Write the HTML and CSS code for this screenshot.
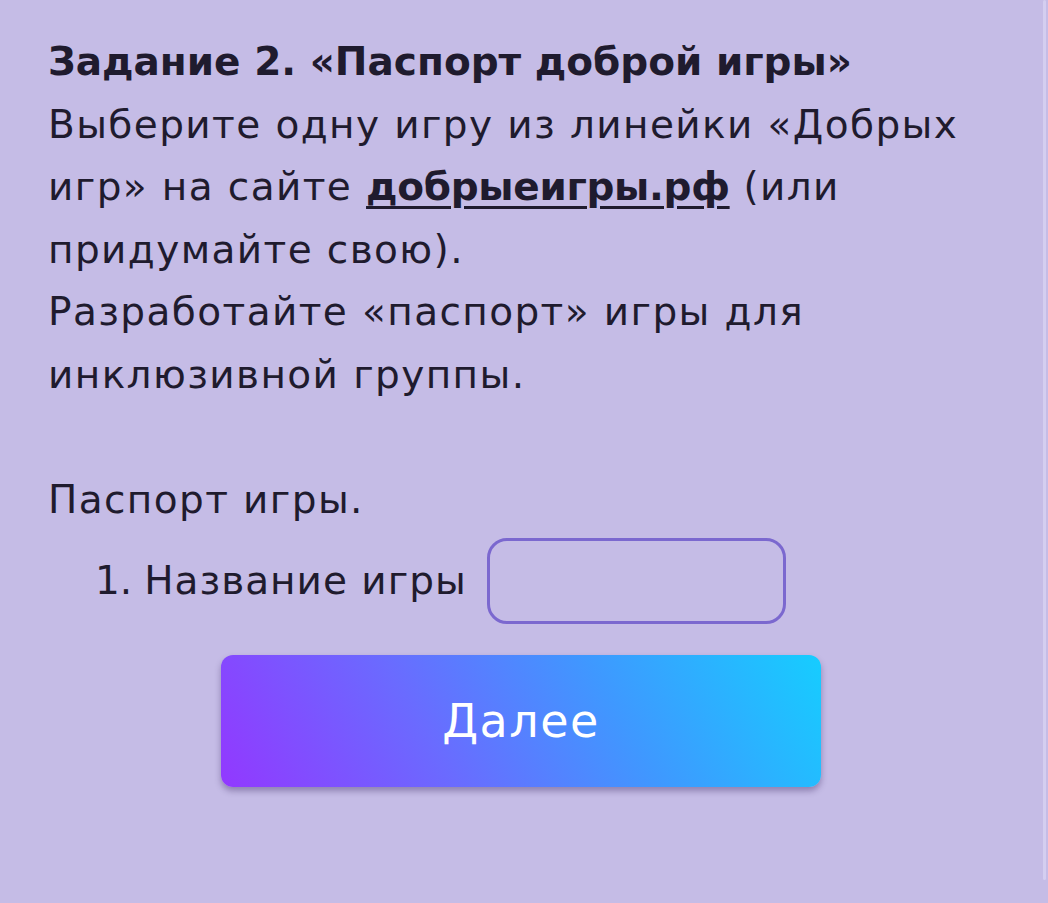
FILE: index.html
```html
<!doctype html>
<html lang="ru">
    <head>
        <meta charset="utf-8">
        <title>Задание 2</title>
        <meta name="viewport" content="width=device-width, initial-scale=1">
        <link rel="stylesheet" href="styles.css">
    </head>
    <body>
        <div class="task">
            <div class="title">Задание 2. «Паспорт доброй игры»</div>
            <div class="text">
                Выберите одну игру из линейки «Добрых игр» на сайте <a href="#">добрыеигры.рф</a> (или придумайте свою).<br>
                Разработайте «паспорт» игры для инклюзивной группы.<br>
                <br>
                Паспорт игры.
            </div>

            <div class="field">
                <span class="num">1.</span>
                <span class="label">Название игры</span>
                <input class="answer" type="text">
            </div>

            <div class="actions">
                <button class="next">Далее</button>
            </div>
        </div>

        <div class="scrollbar"></div>
    </body>
</html>
```

FILE: styles.css
```css
html, body {
    margin: 0;
    height: 100%;
}

body {
    background-color: #c5bce6;
    color: #1f1b2e;
    font-family: "DejaVu Sans", sans-serif;
    overflow: hidden;
}

.task {
    padding: 31px 48px 0 48px;
    font-size: 39px;
    line-height: 62.5px;
    letter-spacing: 1.4px;
}

.title {
    font-weight: bold;
    letter-spacing: 0;
}

.text a {
    color: #1f1b2e;
    font-weight: bold;
    letter-spacing: -0.3px;
    text-decoration: underline;
    text-decoration-thickness: 3px;
    text-underline-offset: 6px;
}

.field {
    display: flex;
    align-items: center;
    margin-top: 7px;
    padding-left: 47px;
    letter-spacing: 1px;
}

.num {
    margin-right: 12px;
    letter-spacing: 0;
}

.answer {
    box-sizing: border-box;
    width: 299px;
    height: 86px;
    margin-left: 20px;
    border: 3px solid #7b68cf;
    border-radius: 20px;
    background: transparent;
    outline: none;
}

.actions {
    display: flex;
    justify-content: center;
    margin-top: 31px;
    padding-right: 6px;
}

.next {
    width: 600px;
    height: 132px;
    border: none;
    border-radius: 12px;
    background: linear-gradient(60deg, #9238ff 0%, #6a6bff 35%, #3f98ff 65%, #16cdff 100%);
    box-shadow: 0 4px 6px rgba(40, 20, 80, 0.35);
    color: #fff;
    font-family: "DejaVu Sans", sans-serif;
    font-size: 46px;
    letter-spacing: 1.5px;
}

.scrollbar {
    position: fixed;
    top: 0;
    right: 2px;
    width: 3px;
    height: 880px;
    background-color: #d4cef0;
    border-radius: 2px;
}
```
